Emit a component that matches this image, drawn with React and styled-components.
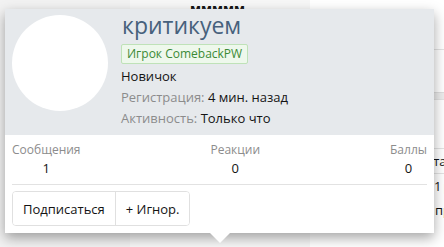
import React from "react";
import styled, { createGlobalStyle } from "styled-components";

const GlobalStyle = createGlobalStyle`
  html, body { margin: 0; padding: 0; }
  body {
    font-family: "Open Sans", "Noto Sans", sans-serif;
    background: #fff;
    color: #141414;
  }
`;

const Page = styled.div`
  position: relative;
  width: 444px;
  height: 247px;
  overflow: hidden;
  display: grid;
  grid-template-columns: 130px 180px 1fr;
`;

const Sidebar = styled.div`
  background: #f2f2f2;
`;

const Middle = styled.div`
  background: #f7f7f7;
  padding: 0 0 0 60px;
`;

const Heading = styled.div`
  font-size: 13px;
  font-weight: 700;
  color: #141414;
  margin-top: -1px;
`;

const RightCol = styled.div`
  background: #fff;
  display: flex;
  flex-direction: column;
  padding-top: 49px;
`;

const Row = styled.div`
  border-top: 1px solid ${(p) => p.$line || "#e3e3e3"};
  height: ${(p) => p.$h}px;
  background: ${(p) => p.$bg || "transparent"};
  font-size: 13px;
  padding-left: ${(p) => p.$indent || 124}px;
  white-space: nowrap;
  display: flex;
  align-items: center;
`;

const Orange = styled.span`
  color: #e8852a;
`;

const Card = styled.div`
  position: absolute;
  left: 5px;
  top: 9px;
  width: 429px;
  background: #fff;
  box-shadow: 0 5px 12px rgba(0, 0, 0, 0.35);
  &::after {
    content: "";
    position: absolute;
    left: 50%;
    bottom: -10px;
    margin-left: -10px;
    border-left: 10px solid transparent;
    border-right: 10px solid transparent;
    border-top: 10px solid #fff;
  }
`;

const Header = styled.div`
  display: flex;
  gap: 13px;
  padding: 6px 7px 6px 7px;
  background: #e6e9ec;
`;

const Avatar = styled.div`
  width: 96px;
  height: 96px;
  border-radius: 50%;
  background: #fff;
  flex: none;
`;

const Info = styled.div`
  display: flex;
  flex-direction: column;
  align-items: flex-start;
`;

const Username = styled.div`
  font-size: 23px;
  line-height: 28px;
  color: #47617c;
  margin-top: -4px;
  margin-left: 1px;
`;

const Badge = styled.span`
  font-size: 12px;
  line-height: 18px;
  color: #3b8a36;
  background: #eef8ec;
  border: 1px solid #bfe2b8;
  border-radius: 2px;
  padding: 0 5px;
  margin-top: 5px;
`;

const Line = styled.div`
  font-size: 13px;
  line-height: 21px;
  color: #141414;
  margin-top: ${(p) => p.$mt || 0}px;
`;

const Muted = styled.span`
  color: #8c8c8c;
`;

const Body = styled.div`
  padding: 0 7px 7px 7px;
`;

const Stats = styled.div`
  display: flex;
  justify-content: space-between;
  padding: 7px 0 5px;
  border-bottom: 1px solid #e2e2e2;
`;

const Stat = styled.dl`
  margin: 0;
  text-align: center;
`;

const StatLabel = styled.dt`
  font-size: 12px;
  line-height: 16px;
  color: #8c8c8c;
`;

const StatValue = styled.dd`
  margin: 0;
  font-size: 13px;
  line-height: 21px;
  color: #141414;
`;

const ButtonGroup = styled.div`
  display: inline-flex;
  margin-top: 6px;
  border: 1px solid #e0e0e0;
  border-radius: 4px;
  overflow: hidden;
`;

const Button = styled.button`
  font-family: inherit;
  font-size: 13px;
  color: #141414;
  background: #fff;
  border: 0;
  border-left: ${(p) => (p.$first ? "0" : "1px solid #e0e0e0")};
  height: 33px;
  padding: 0 10px;
  cursor: pointer;
`;

export default function App() {
  return (
    <>
      <GlobalStyle />
      <Page>
        <Sidebar />
        <Middle>
          <Heading>ммммм</Heading>
        </Middle>
        <RightCol>
          <Row $h={42} />
          <Row $h={6} $bg="#ececec" $line="#dedede" />
          <Row $h={48} />
          <Row $h={24} $indent={117}>ста</Row>
          <Row $h={23}>
            1{"\u2009"}<Orange>р</Orange>
          </Row>
          <Row $h={23} $line="#fff" $indent={125}>
            пр
          </Row>
        </RightCol>
        <Card>
          <Header>
            <Avatar />
            <Info>
              <Username>критикуем</Username>
              <Badge>Игрок ComebackPW</Badge>
              <Line $mt={2}>Новичок</Line>
              <Line>
                <Muted>Регистрация:</Muted> 4 мин. назад
              </Line>
              <Line>
                <Muted>Активность:</Muted> Только что
              </Line>
            </Info>
          </Header>
          <Body>
            <Stats>
              <Stat>
                <StatLabel>Сообщения</StatLabel>
                <StatValue>1</StatValue>
              </Stat>
              <Stat>
                <StatLabel>Реакции</StatLabel>
                <StatValue>0</StatValue>
              </Stat>
              <Stat>
                <StatLabel>Баллы</StatLabel>
                <StatValue>0</StatValue>
              </Stat>
            </Stats>
            <ButtonGroup>
              <Button $first>Подписаться</Button>
              <Button>+ Игнор.</Button>
            </ButtonGroup>
          </Body>
        </Card>
      </Page>
    </>
  );
}
